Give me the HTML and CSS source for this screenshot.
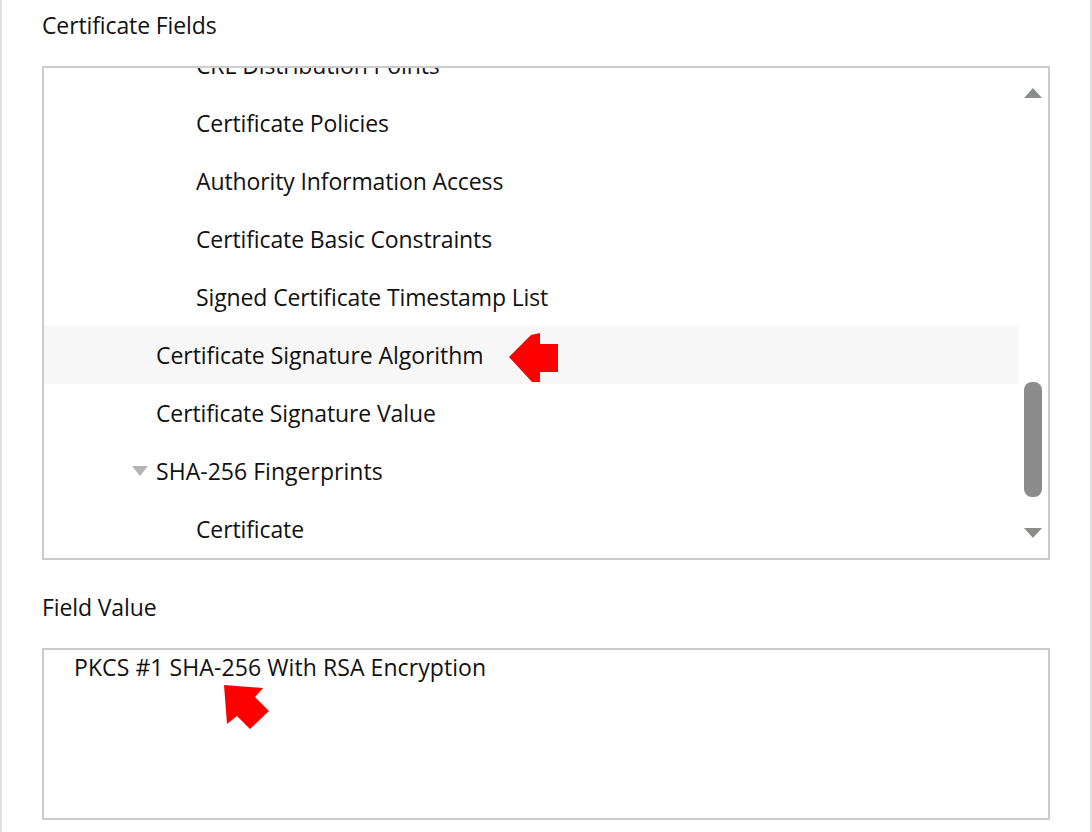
FILE: index.html
```html
<!DOCTYPE html>
<html lang="en">
<head>
<meta charset="utf-8">
<title>Certificate Fields</title>
<link rel="stylesheet" href="styles.css">
</head>
<body>
<main class="panel">
  <h2 class="label">Certificate Fields</h2>
  <section class="tree-box">
    <ul class="tree">
      <li class="row level-2">CRL Distribution Points</li>
      <li class="row level-2">Certificate Policies</li>
      <li class="row level-2">Authority Information Access</li>
      <li class="row level-2">Certificate Basic Constraints</li>
      <li class="row level-2">Signed Certificate Timestamp List</li>
      <li class="row level-1 hover">Certificate Signature Algorithm</li>
      <li class="row level-1">Certificate Signature Value</li>
      <li class="row level-1 parent"><svg class="twisty" width="16" height="10" viewBox="0 0 16 10"><polygon points="0,0 16,0 8,10" fill="#b4b4b4"/></svg>SHA-256 Fingerprints</li>
      <li class="row level-2">Certificate</li>
    </ul>
    <div class="scrollbar">
      <svg class="arrow" width="18" height="10" viewBox="0 0 18 10"><polygon points="9,0 18,10 0,10" fill="#8a8e8a"/></svg>
      <div class="track"><div class="thumb"></div></div>
      <svg class="arrow" width="18" height="10" viewBox="0 0 18 10"><polygon points="0,0 18,0 9,10" fill="#8a8e8a"/></svg>
    </div>
  </section>
  <h2 class="label value-label">Field Value</h2>
  <section class="value-box">PKCS #1 SHA-256 With RSA Encryption</section>
</main>
<svg class="callout" width="1092" height="832" viewBox="0 0 1092 832">
  <polygon points="509,357 531,335 540,333 540,344 558,344 558,372 540,372 540,382 532,382" fill="#fe0000"/>
  <polygon points="224,685 263,688 255,697 269,711 250,729 237,716 227,724" fill="#fe0000"/>
</svg>
</body>
</html>
```
FILE: styles.css
```css
html, body {
  margin: 0;
  padding: 0;
  background: #fff;
}
body {
  width: 1092px;
  height: 832px;
  overflow: hidden;
  position: relative;
  font-family: "Open Sans", "Noto Sans", sans-serif;
  font-size: 23px;
  color: #111;
}
.panel {
  box-sizing: border-box;
  width: 1092px;
  height: 832px;
  padding: 0 40px 0 40px;
  border-left: 2px solid #e0e0e0;
  border-right: 2px solid #e0e0e0;
}
.label {
  margin: 0;
  font-size: inherit;
  font-weight: 400;
  height: 66px;
  line-height: 50px;
  letter-spacing: -0.12px;
}
.value-label {
  height: 88px;
  line-height: 95px;
}
.tree-box {
  box-sizing: border-box;
  height: 494px;
  border: 2px solid #ccc;
  display: flex;
  overflow: hidden;
}
.tree {
  list-style: none;
  margin: -32px 0 0 0;
  padding: 0;
  width: 974px;
  flex: none;
}
.row {
  height: 58px;
  line-height: 58px;
  letter-spacing: -0.12px;
  white-space: nowrap;
  box-sizing: border-box;
  display: flex;
  align-items: center;
}
.level-1 { padding-left: 112px; }
.level-2 { padding-left: 152px; }
.hover { background: #f7f7f7; letter-spacing: -0.05px; }
.parent { padding-left: 88px; letter-spacing: 0.03px; }
.twisty { margin-right: 8px; }
.scrollbar {
  flex: 1;
  display: flex;
  flex-direction: column;
  align-items: center;
  padding: 20px 0 20px;
}
.track {
  flex: 1;
  width: 18px;
  padding-top: 284px;
}
.thumb {
  width: 18px;
  height: 115px;
  border-radius: 8px;
  background: #8c8c8c;
}
.arrow { flex: none; display: block; }
.value-box {
  box-sizing: border-box;
  height: 172px;
  border: 2px solid #ccc;
  padding: 1px 0 0 30px;
  line-height: 32px;
  letter-spacing: 0.08px;
}
.callout {
  position: absolute;
  left: 0;
  top: 0;
  pointer-events: none;
}
```
